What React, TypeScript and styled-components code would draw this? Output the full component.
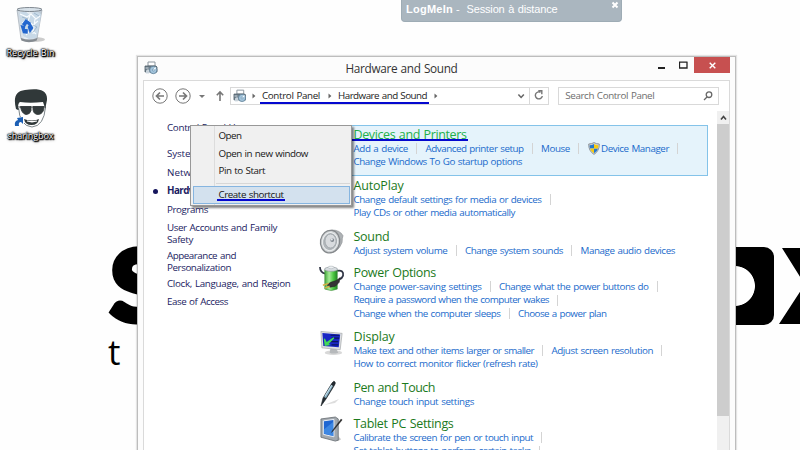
import React, { useLayoutEffect, useRef, useState } from "react";
import styled, { createGlobalStyle, css } from "styled-components";

const GlobalStyle = createGlobalStyle`
  * { box-sizing: border-box; }
  body { margin: 0; background: #fefefe; font-family: "Open Sans", "Noto Sans", sans-serif; }
`;

const Desktop = styled.div`
  position: relative;
  width: 800px;
  height: 450px;
  overflow: hidden;
  background: #fefefe;
`;

/* ---------- text that is tracked to a given width ---------- */

const FitSpan = styled.span<{ $width: number }>`
  display: block;
  flex: none;
  width: ${(p) => p.$width}px;
  white-space: nowrap;
  word-spacing: 0.7px;
`;

function Fit({ w, children }: { w: number; children: string }) {
  const ref = useRef<HTMLSpanElement>(null);
  const [spacing, setSpacing] = useState(0);
  useLayoutEffect(() => {
    if (ref.current) {
      setSpacing((w - ref.current.getBoundingClientRect().width) / children.length);
    }
  }, [w, children]);
  return (
    <FitSpan $width={w} style={{ letterSpacing: spacing }}>
      <span ref={ref}>{children}</span>
    </FitSpan>
  );
}

/* ---------- wallpaper ---------- */

const WallpaperLetter = styled.div<{ $x: number; $y: number; $size: number }>`
  position: absolute;
  left: ${(p) => p.$x}px;
  top: ${(p) => p.$y}px;
  font: 900 ${(p) => p.$size}px/1 Lato, sans-serif;
  -webkit-text-stroke: 6px #000;
  color: #000;
`;

const WallpaperTagline = styled.div`
  position: absolute;
  left: 108px;
  top: 328px;
  font-size: 35px;
  line-height: 48px;
  color: #000;
`;

const WallpaperBlock = styled.div`
  position: absolute;
  left: 690px;
  top: 247px;
  width: 84px;
  height: 78px;
  border-radius: 10px;
  background: radial-gradient(circle at 45px 39px, #fff 19.5px, #000 20.3px);
`;

const WallpaperCross = styled.div`
  position: absolute;
  left: 779px;
  top: 248px;
  width: 60px;
  height: 76px;
  background: #000;
  clip-path: polygon(5% 0, 100% 0, 100% 100%, 0 100%, 43% 48%);
`;

/* ---------- desktop icons ---------- */

const DesktopIcons = styled.div`
  position: absolute;
  left: 0;
  top: 6px;
  width: 61px;
  display: flex;
  flex-direction: column;
  gap: 27px;
`;

const DesktopIcon = styled.div`
  display: flex;
  flex-direction: column;
  align-items: center;
  height: 56px;
  font-size: 9px;
  line-height: 12px;
  color: #fff;
  text-shadow: 0 0 1px #000, 0 0 1px #000, 1px 1px 1px #000, 1px 1px 1px #000, 0 0 2px #000, 0 0 2px #000, 1px 1px 3px #333;
  svg { flex: none; margin-bottom: 1px; }
`;

const RecycleBin = () => (
  <svg width="34" height="40" viewBox="0 0 34 40">
    <defs>
      <linearGradient id="bin" x1="0" x2="1">
        <stop offset="0" stopColor="#c9d3dc" />
        <stop offset=".4" stopColor="#edf3f8" />
        <stop offset="1" stopColor="#b7c3cf" />
      </linearGradient>
    </defs>
    <ellipse cx="20" cy="33.500" rx="11" ry="2.500" fill="#ccc" />
    <path d="M3 4 7 33 Q16 37 23 33 L28 4Z" fill="url(#bin)" stroke="#9ba5ae" strokeWidth=".6" />
    <path d="M5 7 11 5l5 4 6-4 5 3-1 8-1 4-1 6-2 6-7 1-6-3-2-10z" fill="#c8d9e7" />
    <path d="m6 8 7 3 4-3 5 5 4-3M8 17l5-3 6 5 5-4M12 29l5-5 5 4M16 9l-3 10M21 13l-2 15" fill="none" stroke="#f8fcff" strokeWidth="1.1" />
    <path d="m8 11 6 2-3 3M19 19l4 2-4 5M20 7l5 3" fill="none" stroke="#91abc2" strokeWidth=".7" />
    <ellipse cx="15.500" cy="3.500" rx="12.500" ry="2" fill="#d8e2ea" stroke="#737c84" strokeWidth=".9" />
    <path d="M7 32q8 3 16.300 0l-.5 2.500q-8 3.500-15.500 0z" fill="#858b91" />
    <path d="m9 18 3-4 4 3-1.500 1.200-2-1-1.500 2.300zM16 18l2.500 4-2.500 3.500-1-3-.5-1.500zM7.500 20l3 .5-.5 3 3 .5v3l-3.500-.5z" fill="#2367cf" stroke="#2367cf" strokeWidth="1.500" />
  </svg>
);

const FaceIcon = () => (
  <svg width="38" height="40" viewBox="0 0 38 40">
    <path d="M4 20C1 8 4 2 13 1 25-1 36 0 35 11l-2 10H6Z" fill="#303839" />
    <path d="M6.500 18q1 19 13.500 20 12-1 13.500-20" fill="#fff" stroke="#5a666b" strokeWidth=".8" />
    <path d="M6 19q0-5 2-6 10 1.500 23 0l2 6Z" fill="#fff" />
    <path d="M6 18h28M8.500 17.500h10.500v4q-1 4-5 4-4.500-1-5.500-8zM21 17.500h11q0 7-5.500 8-5 0-5.500-5z" fill="#343b3c" stroke="#343b3c" strokeWidth=".9" />
    <path d="M12 30q8 3 15 0-1 6-7.500 6-6.500 0-7.500-6z" fill="#303839" />
    <path d="M15 32q5 1.500 10 0" stroke="#fff" strokeWidth="1.300" fill="none" />
    <path d="M3 28h9v10H3z" fill="#fff" />
    <path d="M3 37q-1-5 3-6l-1-2 6-1v7l-2-2q-3 0-2 4z" fill="#1c5fb4" />
  </svg>
);

/* ---------- remote session banner ---------- */

const SessionBanner = styled.div`
  position: absolute;
  left: 401px;
  top: 0;
  width: 221px;
  height: 22px;
  padding: 0 2px 4px 4px;
  display: flex;
  align-items: center;
  background: #aab6bf;
  border: 1px solid #9eacb5;
  border-top: 0;
  border-radius: 0 0 4px 4px;
  font: 11px/18px "Liberation Sans", Arial, sans-serif;
  color: #fff;
  svg { margin: -8px 0 0 auto; }
`;

const BannerName = styled.b`
  width: 50px;
`;

const BannerDash = styled.span`
  width: 10.500px;
`;

/* ---------- window ---------- */

const Window = styled.div`
  position: absolute;
  left: 137px;
  top: 56px;
  width: 599px;
  height: 410px;
  padding: 0 5px;
  background: #fcfcfc;
  border: 1px solid #bdbdbd;
  box-shadow: 0 0 1px 1px rgba(0, 0, 0, 0.1);
`;

const TitleBar = styled.div`
  display: flex;
  align-items: flex-start;
  height: 23px;
`;

const TitleIcon = styled.div`
  display: flex;
  width: 202.500px;
  padding: 4px 0 0 1px;
`;

const WindowTitle = styled.div`
  flex: 1;
  font-size: 11.800px;
  line-height: 23px;
  color: #333;
`;

const CaptionButton = styled.div<{ $close?: boolean }>`
  display: flex;
  align-items: center;
  justify-content: center;
  width: 21.500px;
  height: 16px;
  ${(p) => p.$close && css`
    width: 36px;
    background: #c75050;
  `}
`;

const Client = styled.div`
  height: 390px;
  background: #fff;
  border: 1px solid #dadada;
`;

const AddressRow = styled.div`
  display: flex;
  align-items: center;
  height: 30px;
  padding: 0 10px 1px 8px;
  font-size: 9.800px;
`;

const NavButtons = styled.div`
  display: flex;
  align-items: center;
  width: 79px;
`;

const AddressBox = styled.div`
  display: flex;
  align-items: center;
  width: 319px;
  height: 18px;
  border: 1px solid #d9d9d9;
  color: #222;
`;

const Crumb = styled.div`
  position: relative;
  display: flex;
  align-items: center;
  height: 16px;
  line-height: 14px;
`;

const Marker = styled.i<{ $left: number; $width: number; $top: number }>`
  position: absolute;
  left: ${(p) => p.$left}px;
  top: ${(p) => p.$top}px;
  width: ${(p) => p.$width}px;
  height: 2px;
  background: #0508cf;
`;

const RefreshCell = styled.div`
  display: flex;
  align-items: center;
  justify-content: center;
  width: 20px;
  height: 16px;
  border-left: 1px solid #d9d9d9;
`;

const SearchBox = styled.div`
  display: flex;
  align-items: center;
  justify-content: space-between;
  width: 162px;
  height: 18px;
  margin-left: 9px;
  padding: 0 5px 0 6px;
  border: 1px solid #d9d9d9;
  line-height: 14px;
  color: #6d6d6d;
`;

const Body = styled.div`
  display: flex;
  height: 350px;
`;

const Sidebar = styled.div`
  width: 172px;
  padding: 11px 0 0 23px;
  font-size: 9.800px;
  line-height: 12px;
  color: #1b1b62;
`;

const SideItem = styled.div<{ $h: number; $active?: boolean }>`
  position: relative;
  height: ${(p) => p.$h}px;
  ${(p) => p.$active && css`
    font-weight: 700;
    &::before {
      content: "";
      position: absolute;
      left: -14px;
      top: 4px;
      width: 5px;
      height: 5px;
      border-radius: 50%;
      background: #15155c;
    }
  `}
`;

const Categories = styled.div`
  width: 392px;
  padding-top: 14px;
`;

const Category = styled.div<{ $h: number; $hot?: boolean }>`
  display: flex;
  height: ${(p) => p.$h}px;
  ${(p) => p.$hot && css`
    background: #e5f3fb;
    box-shadow: inset 0 0 0 1px #84c3e9;
  `}
`;

const CategoryIcon = styled.div`
  width: 37.500px;
  padding: 2px 0 0 3px;
`;

const CategoryText = styled.div`
  width: 350px;
`;

const Heading = styled.div<{ $hot?: boolean }>`
  position: relative;
  height: 17px;
  font-size: 12.500px;
  line-height: 19px;
  color: ${(p) => (p.$hot ? "#22b04a" : "#1c7a1c")};
`;

const LinkRow = styled.div`
  display: flex;
  align-items: center;
  height: 13.500px;
  font-size: 9.800px;
  line-height: 14.400px;
  color: #1a6acb;
`;

const Divider = styled.i`
  flex: none;
  width: 1px;
  height: 11px;
  margin: 0 8.500px 0 8px;
  background: #d4d4d4;
`;

const ShieldSlot = styled.div`
  display: flex;
  width: 13.500px;
`;

const Scrollbar = styled.div`
  width: 12px;
  margin-left: 9px;
  background: #f0f0f0;
`;

const ScrollArrow = styled.div`
  display: flex;
  align-items: center;
  justify-content: center;
  height: 13px;
`;

const ScrollThumb = styled.div`
  height: 292px;
  background: #cdcdcd;
`;

/* ---------- context menu ---------- */

const ContextMenu = styled.div`
  position: absolute;
  left: 190px;
  top: 125px;
  width: 162px;
  height: 81px;
  padding: 1px;
  background: linear-gradient(90deg, transparent 23px, #dcdcdc 23px, #dcdcdc 24px, #fff0 24px) #f0f0f0;
  border: 1px solid #989898;
  box-shadow: 2px 2px 2px rgba(0, 0, 0, 0.48);
  font-size: 9.800px;
  line-height: 18px;
  color: #161616;
`;

const MenuItem = styled.div<{ $hot?: boolean }>`
  position: relative;
  height: 17.500px;
  padding-left: 26.500px;
  ${(p) => p.$hot && css`
    margin: 0 0 0 1px;
    padding-left: 24.500px;
    height: 18px;
    line-height: 15px;
    background: #d3e1ee;
    border: 1px solid #86b5e0;
  `}
`;

const MenuRule = styled.div`
  height: 1px;
  margin: 3px 0 2px 24px;
  background: #d7d7d7;
`;

/* ---------- small icons ---------- */

const PrinterIcon = () => (
  <svg width="14" height="14" viewBox="0 0 14 14">
    <path d="M4 1h7v4H4z" fill="#fff" stroke="#8c969e" />
    <path d="M1 5h11l1 1v5H1z" fill="#70808c" stroke="#4f5d68" strokeWidth=".8" />
    <path d="M1.500 7h3M3 9h2v3H2z" stroke="#cbd5dd" fill="#c4d0d9" />
    <circle cx="9.300" cy="9" r="3.700" fill="#a4c5dc" stroke="#5b7b93" strokeWidth=".8" />
    <path d="m9.300 9 2.500-2.500" stroke="#f4fbff" strokeWidth="1.200" />
    <circle cx="9.300" cy="9" r="1" fill="#fff" stroke="#4c7ca0" strokeWidth=".6" />
  </svg>
);

const RoundArrow = ({ forward }: { forward?: boolean }) => (
  <svg width="16" height="16" viewBox="0 0 16 16" fill="none" stroke="#777">
    <circle cx="8" cy="8" r="7.200" strokeWidth="1" />
    <path d={forward ? "M4 8h7.500M8 4.500 11.500 8 8 11.500" : "M12 8H4.500M8 4.500 4.500 8 8 11.500"} strokeWidth="1.700" />
  </svg>
);

const CrumbArrow = () => (
  <svg width="4" height="6" viewBox="0 0 4 6"><path d="m.5.5 3 2.500-3 2.500z" fill="#666" /></svg>
);

const Shield = () => (
  <svg width="12" height="13" viewBox="0 0 12 13">
    <path d="M6 .6Q8.500 2 11.300 2q.2 7-5.300 10.400Q.5 9 .7 2 3.500 2 6 .6z" fill="#d4d6d8" stroke="#858c93" strokeWidth=".9" />
    <path d="M6 2v4.500H2q-.5-1.800-.3-3.200Q4 3.200 6 2zM6 6.500h4q-.7 3-4 4.700z" fill="#2477cf" />
    <path d="M6 2v4.500h4q.5-1.800.3-3.200Q8 3.200 6 2zM6 6.500H2q.7 3 4 4.700z" fill="#f6cb12" />
  </svg>
);

const SpeakerIcon = () => (
  <svg width="25" height="26" viewBox="0 0 26 27">
    <path d="M13 1q9 0 12 6-1 2-1 7-4 10-12 11z" fill="#aeb2b5" stroke="#85898c" strokeWidth=".6" />
    <ellipse cx="11.500" cy="13" rx="10" ry="11.800" fill="#cfd2d4" stroke="#85898c" strokeWidth="1.300" transform="rotate(10 11 13)" />
    <ellipse cx="11.500" cy="13" rx="7.800" ry="9.400" fill="#b2b7bb" stroke="#edf0f1" strokeWidth="1" transform="rotate(10 11 13)" />
    <ellipse cx="12" cy="12.500" rx="5.800" ry="7.300" fill="#d8dbde" stroke="#999fa4" strokeWidth=".8" />
    <circle cx="13.800" cy="11.500" r="2" fill="#828990" />
    <circle cx="13.300" cy="10.800" r="1.100" fill="#e3e7ea" />
  </svg>
);

const PowerIcon = () => (
  <svg width="26" height="28" viewBox="0 0 27 29">
    <defs>
      <linearGradient id="cell"><stop stopColor="#46a83f" /><stop offset=".35" stopColor="#a6ec96" /><stop offset=".7" stopColor="#48c53e" /><stop offset="1" stopColor="#238323" /></linearGradient>
    </defs>
    <path d="M1 2q0 6 6 7M19 6q7-1 6 5-1 3-4 4" fill="none" stroke="#303545" strokeWidth="1.800" />
    <path d="M6 5q6-3 13 0v20q-6 3-13 0z" fill="url(#cell)" stroke="#3c8936" strokeWidth=".6" />
    <ellipse cx="12.500" cy="4.300" rx="6.800" ry="2.200" fill="#d8dde1" stroke="#8d969b" strokeWidth=".7" />
    <ellipse cx="12.500" cy="2.500" rx="3" ry="1.400" fill="#edf0f2" stroke="#a4abaf" strokeWidth=".5" />
    <path d="m9 20 3-2 6-2 4-3-1 5-4 4-5 1-3-1z" fill="#343434" stroke="#1c1c1c" strokeWidth=".5" />
    <path d="m4 21 6-2M6 24l5-2" stroke="#d9ae48" strokeWidth="1.400" />
  </svg>
);

const DisplayIcon = () => (
  <svg width="26" height="28" viewBox="0 0 27 28">
    <ellipse cx="15" cy="24" rx="9" ry="2.500" fill="#d8d8d8" />
    <path d="m12 19 6 1 2 4q-5 2-9 0z" fill="#b6b9bb" />
    <path d="M2 2 24 4 22 21 3 19Z" fill="#dfe1e3" stroke="#a2a7aa" strokeWidth=".7" />
    <path d="M3.500 3.500 22 5.300l-1.500 13.200L4.500 17z" fill="#1826c4" />
    <path d="M12 6h9M13 9h8M12 12.500h8M13 16h7" stroke="#09155c" strokeWidth="1.200" />
    <path d="m5 10 1-1 2 4 7-5 1 1-6 6 2 1-6 1z" fill="#43d958" />
  </svg>
);

const PenIcon = () => (
  <svg width="27" height="29" viewBox="0 0 27 29">
    <path d="M5 25 20 19l-4 4z" fill="#ddd" />
    <path d="M2 26 4 18 13 3q2-3 3-1 1 1-1 4L7 19z" fill="#242b31" stroke="#161c21" strokeWidth=".6" />
    <path d="m5 17 7-12 2 1-7 12z" fill="#8ab3c7" />
    <path d="m6 16 7-11" stroke="#d9eef6" strokeWidth=".8" />
  </svg>
);

const TabletIcon = () => (
  <svg width="26" height="29" viewBox="0 0 27 30">
    <path d="m4 22 16 4 3-2-3-3z" fill="#c5c5c5" />
    <path d="m2 3 15-2 3 2v22l-3 1-15-4z" fill="#a2a8ae" stroke="#62686d" strokeWidth=".8" />
    <path d="m4.500 5 11-1.500v18L4.500 19z" fill="#1f66d2" stroke="#f0f3f5" strokeWidth="1" />
    <path d="m5 14 10-8v15L5 18z" fill="#5ba8f2" opacity=".5" />
    <path d="m14 15 9-12 1 1-9 11-2 2z" fill="#222" stroke="#333" strokeWidth=".5" />
  </svg>
);

/* ---------- content ---------- */

type Entry = { text: string; w: number; divider?: boolean; shield?: boolean };
type Section = { title: string; w: number; h: number; hot?: boolean; icon?: React.ReactNode; rows: Entry[][] };

const sections: Section[] = [
  {
    title: "Devices and Printers", w: 113, h: 51, hot: true,
    rows: [
      [
        { text: "Add a device", w: 54.5, divider: true },
        { text: "Advanced printer setup", w: 98, divider: true },
        { text: "Mouse", w: 29, divider: true },
        { text: "Device Manager", w: 68, divider: true, shield: true },
      ],
      [{ text: "Change Windows To Go startup options", w: 168.5 }],
    ],
  },
  {
    title: "AutoPlay", w: 50, h: 51,
    rows: [
      [{ text: "Change default settings for media or devices", w: 188, divider: true }],
      [{ text: "Play CDs or other media automatically", w: 161.5 }],
    ],
  },
  {
    title: "Sound", w: 36, h: 36, icon: <SpeakerIcon />,
    rows: [[
      { text: "Adjust system volume", w: 94, divider: true },
      { text: "Change system sounds", w: 98, divider: true },
      { text: "Manage audio devices", w: 94.5 },
    ]],
  },
  {
    title: "Power Options", w: 82.5, h: 64, icon: <PowerIcon />,
    rows: [
      [
        { text: "Change power-saving settings", w: 128, divider: true },
        { text: "Change what the power buttons do", w: 149.5, divider: true },
      ],
      [{ text: "Require a password when the computer wakes", w: 195.5, divider: true }],
      [
        { text: "Change when the computer sleeps", w: 147, divider: true },
        { text: "Choose a power plan", w: 88.5 },
      ],
    ],
  },
  {
    title: "Display", w: 41, h: 51, icon: <DisplayIcon />,
    rows: [
      [
        { text: "Make text and other items larger or smaller", w: 180.5, divider: true },
        { text: "Adjust screen resolution", w: 101.5, divider: true },
      ],
      [{ text: "How to correct monitor flicker (refresh rate)", w: 184 }],
    ],
  },
  {
    title: "Pen and Touch", w: 81.5, h: 36, icon: <PenIcon />,
    rows: [[{ text: "Change touch input settings", w: 120.5 }]],
  },
  {
    title: "Tablet PC Settings", w: 100, h: 51, icon: <TabletIcon />,
    rows: [
      [{ text: "Calibrate the screen for pen or touch input", w: 179.5, divider: true }],
      [{ text: "Set tablet buttons to perform certain tasks", w: 177, divider: true }],
    ],
  },
];

export default function App() {
  return (
    <Desktop>
      <GlobalStyle />
      <WallpaperLetter $x={110.5} $y={234} $size={98}>S</WallpaperLetter>
      <WallpaperBlock />
      <WallpaperCross />
      <WallpaperTagline>t</WallpaperTagline>

      <DesktopIcons>
        <DesktopIcon><RecycleBin /><Fit w={48}>Recycle Bin</Fit></DesktopIcon>
        <DesktopIcon><FaceIcon /><Fit w={46}>sharingbox</Fit></DesktopIcon>
      </DesktopIcons>

      <SessionBanner>
        <BannerName><Fit w={47}>LogMeIn</Fit></BannerName>
        <BannerDash>-</BannerDash>
        <Fit w={91}>Session à distance</Fit>
        <svg width="8" height="8" viewBox="0 0 8 8"><path d="m1.500 1.500 5 5m0-5-5 5" stroke="#fff" strokeWidth="2" /></svg>
      </SessionBanner>

      <Window>
        <TitleBar>
          <TitleIcon><PrinterIcon /></TitleIcon>
          <WindowTitle><Fit w={112}>Hardware and Sound</Fit></WindowTitle>
          <CaptionButton><svg width="7" height="8"><path d="M0 7h7" stroke="#222" strokeWidth="2" /></svg></CaptionButton>
          <CaptionButton><svg width="9" height="8"><path d="M.5 1v6h7.500V1M0 1.200h8.500" fill="none" stroke="#222" strokeWidth="1.300" /></svg></CaptionButton>
          <CaptionButton $close><svg width="7" height="7"><path d="m.7.7 5.600 5.600m0-5.600L.7 6.300" stroke="#fff" strokeWidth="1.400" /></svg></CaptionButton>
        </TitleBar>
        <Client>
          <AddressRow>
            <NavButtons>
              <RoundArrow />
              <svg width="6.500" height="1" />
              <RoundArrow forward />
              <svg width="24" height="12" viewBox="0 0 24 12">
                <path d="M8 5h6l-3 3z" fill="#777" />
              </svg>
              <svg width="10" height="12" viewBox="0 0 10 12" fill="none" stroke="#777" strokeWidth="1.600"><path d="M5 11V2M1.800 5.200 5 2l3.200 3.200" /></svg>
            </NavButtons>
            <AddressBox>
              <svg width="1.500" height="1" />
              <PrinterIcon />
              <svg width="6" height="1" />
              <CrumbArrow />
              <svg width="6" height="1" />
              <Crumb><Fit w={58}>Control Panel</Fit><Marker $left={-2} $top={14} $width={169} /></Crumb>
              <svg width="8" height="1" />
              <CrumbArrow />
              <svg width="6.500" height="1" />
              <Crumb><Fit w={89}>Hardware and Sound</Fit></Crumb>
              <svg width="7.500" height="1" />
              <CrumbArrow />
              <svg width="78" height="1" />
              <svg width="15" height="8" viewBox="0 0 15 8"><path d="m4.500 2.500 2.800 3 2.800-3" fill="none" stroke="#666" strokeWidth="1.600" /></svg>
              <RefreshCell>
                <svg width="10" height="11" viewBox="0 0 10 11" fill="none" stroke="#777" strokeWidth="1.400"><path d="M6.500 2.300A3.500 3.500 0 1 0 8.300 6M4.300.8h3.500v3.500" /></svg>
              </RefreshCell>
            </AddressBox>
            <SearchBox>
              <Fit w={89}>Search Control Panel</Fit>
              <svg width="10" height="10" viewBox="0 0 10 10" fill="none" stroke="#666" strokeWidth="1.300"><circle cx="6" cy="3.700" r="2.800" /><path d="M4 6 1 9" /></svg>
            </SearchBox>
          </AddressRow>
          <Body>
            <Sidebar>
              <SideItem $h={26}><Fit w={88}>Control Panel Home</Fit></SideItem>
              <SideItem $h={19}><Fit w={91}>System and Security</Fit></SideItem>
              <SideItem $h={18}><Fit w={101}>Network and Internet</Fit></SideItem>
              <SideItem $h={19} $active><Fit w={94}>Hardware and Sound</Fit></SideItem>
              <SideItem $h={18}><Fit w={41}>Programs</Fit></SideItem>
              <SideItem $h={28}><Fit w={110}>User Accounts and Family</Fit><Fit w={26}>Safety</Fit></SideItem>
              <SideItem $h={28}><Fit w={69}>Appearance and</Fit><Fit w={64}>Personalization</Fit></SideItem>
              <SideItem $h={18}><Fit w={123.5}>Clock, Language, and Region</Fit></SideItem>
              <SideItem $h={18}><Fit w={61}>Ease of Access</Fit></SideItem>
            </Sidebar>
            <Categories>
              {sections.map((s) => (
                <Category key={s.title} $h={s.h} $hot={s.hot}>
                  <CategoryIcon>{s.icon}</CategoryIcon>
                  <CategoryText>
                    <Heading $hot={s.hot}>
                      <Fit w={s.w}>{s.title}</Fit>
                      {s.hot && <Marker $left={-2} $top={14} $width={116} />}
                    </Heading>
                    {s.rows.map((row, i) => (
                      <LinkRow key={i}>
                        {row.map((e) => (
                          <React.Fragment key={e.text}>
                            {e.shield && <ShieldSlot><Shield /></ShieldSlot>}
                            <Fit w={e.w}>{e.text}</Fit>
                            {e.divider && <Divider />}
                          </React.Fragment>
                        ))}
                      </LinkRow>
                    ))}
                  </CategoryText>
                </Category>
              ))}
            </Categories>
            <Scrollbar>
              <ScrollArrow><svg width="7" height="6"><path d="m1 4.500 2.500-3 2.500 3" fill="none" stroke="#444" strokeWidth="1.600" /></svg></ScrollArrow>
              <ScrollThumb />
            </Scrollbar>
          </Body>
        </Client>
      </Window>

      <ContextMenu>
        <MenuItem><Fit w={23}>Open</Fit></MenuItem>
        <MenuItem><Fit w={89.5}>Open in new window</Fit></MenuItem>
        <MenuItem><Fit w={46.5}>Pin to Start</Fit></MenuItem>
        <MenuRule />
        <MenuItem $hot><Fit w={65}>Create shortcut</Fit><Marker $left={23} $top={12} $width={68} /></MenuItem>
      </ContextMenu>
    </Desktop>
  );
}
